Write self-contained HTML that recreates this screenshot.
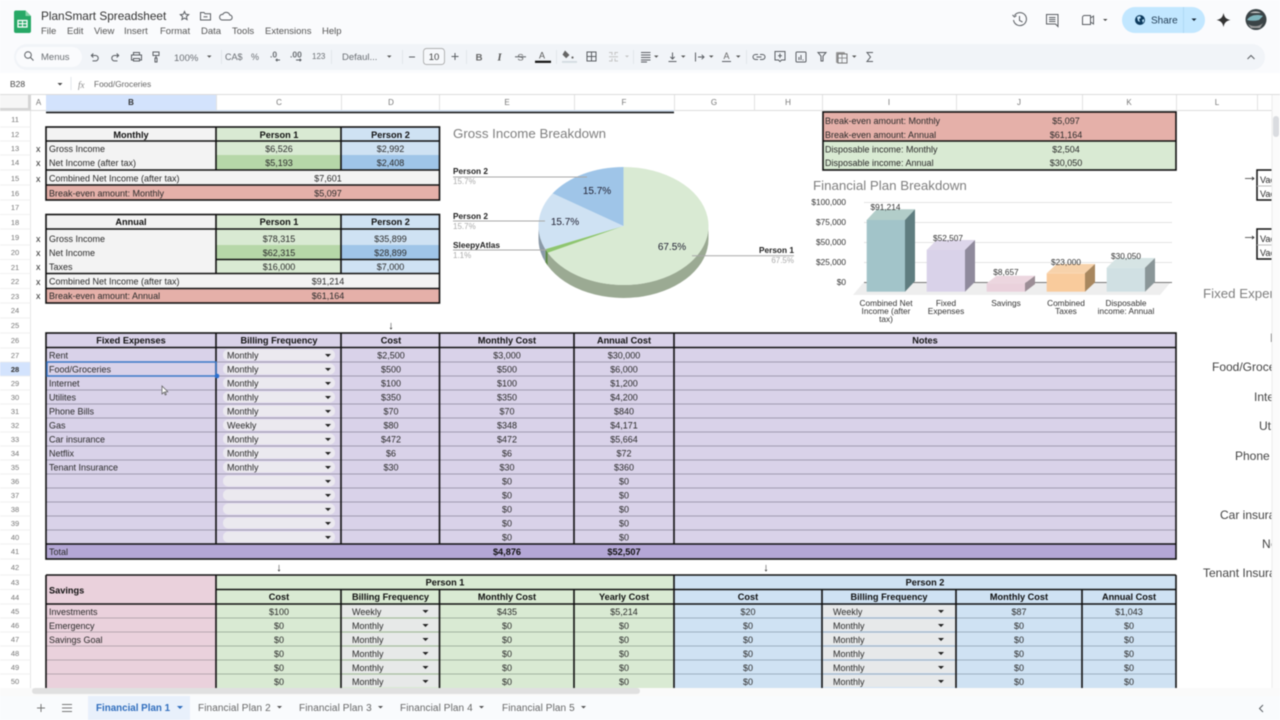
<!DOCTYPE html>
<html><head><meta charset="utf-8"><title>PlanSmart Spreadsheet</title>
<style>
html,body{margin:0;padding:0;background:#fff;width:1280px;height:720px;overflow:hidden}
svg{display:block;font-family:"Liberation Sans",Arial,sans-serif;filter:blur(.4px)}
text{font-size:9px;fill:#2a2a2a}
.m{text-anchor:middle}.b{font-weight:700;fill:#111;font-size:9.2px}
.rh text,.rh{font-size:7.5px;fill:#777;text-anchor:middle}
.ch text{font-size:8px;fill:#777;text-anchor:middle}
.menu text{font-size:9.5px;fill:#555}
.ic{fill:none;stroke:#5a5e63;stroke-width:1}
.ar{fill:#222}
.tb{font-size:9.5px;fill:#6a6e73}
.bx{fill:none;stroke:#111;stroke-width:1.6}
.th{stroke:#111;stroke-width:1.6}
.ln{stroke:#8f8b9d;stroke-width:.8}
.lg{stroke:#93a28f;stroke-width:.8}
.lb{stroke:#8ea0ae;stroke-width:.8}
.chip{fill:#ebe9ef}
.tab{font-size:10px;fill:#666;letter-spacing:.1px}
.ttl{font-size:13.3px;fill:#7f7f7f}
.pl{font-size:8.3px;font-weight:700;fill:#222}
.ps{font-size:8px;fill:#aaa}
.cv{font-size:8.3px;fill:#333}
.side{font-size:12px;fill:#444}
</style></head><body>
<svg width="1280" height="720" viewBox="0 0 1280 720" xmlns="http://www.w3.org/2000/svg">
<!-- chrome -->
<rect width="1280" height="95" fill="#fafbfd"/>
<rect y="73" width="1280" height="22" fill="#fff"/>
<rect x="14" y="44" width="1251" height="26" rx="13" fill="#f1f4f8"/>
<rect x="16" y="47" width="66" height="20" rx="10" fill="#fafbfd"/>
<path d="M14 12.500a2 2 0 0 1 2-2h9.500l5.500 5.500v15a2 2 0 0 1-2 2H16a2 2 0 0 1-2-2z" fill="#27a866"/>
<path d="M25.500 10.500l5.500 5.500h-5.500z" fill="#86d3a8"/>
<rect x="18" y="20.500" width="9" height="6.500" fill="none" stroke="#fff" stroke-width="1.300"/><path d="M18 23.700h9M22.500 20.500v6.500" stroke="#fff" stroke-width="1.100"/>
<text x="41" y="20" style="font-size:11.8px;fill:#333">PlanSmart Spreadsheet</text>
<path d="M184.500 11.500l1.200 2.800 3 .3-2.300 2 .7 3-2.600-1.500-2.600 1.500.7-3-2.300-2 3-.3z" class="ic"/>
<path d="M200.500 12.500h3.500l1 1.300h5.500v6.200h-10z" class="ic"/><path d="M203.500 16.800h4" class="ic"/>
<path d="M222 20h7.500a2.500 2.500 0 0 0 .3-5 3.800 3.800 0 0 0-7-.6 2.800 2.800 0 0 0-.8 5.600z" class="ic"/>
<g class="menu"><text x="41" y="34">File</text><text x="67" y="34">Edit</text><text x="94" y="34">View</text><text x="124" y="34">Insert</text><text x="160" y="34">Format</text><text x="201" y="34">Data</text><text x="232" y="34">Tools</text><text x="265" y="34">Extensions</text><text x="322" y="34">Help</text></g>
<!-- toolbar -->
<circle cx="28" cy="55" r="3.300" class="ic"/><path d="M30.500 57.500l3 3" class="ic"/>
<text x="41" y="60" class="tb">Menus</text>
<path d="M91.500 55.500h4a2.700 2.700 0 0 1 0 5.400h-3M93.300 53.500l-2 2 2 2" class="ic"/>
<path d="M118.500 55.500h-4a2.700 2.700 0 0 0 0 5.400h3M116.700 53.500l2 2-2 2" class="ic"/>
<path d="M131.500 55h10v5h-2v-1.500h-6V60h-2zM133.500 55v-2.500h6V55M133.500 58.500V61h6v-2.500" class="ic"/>
<path d="M153 52h6v3.500h-6zM156 55.500v2.500M155 58h2v4h-2z" class="ic"/>
<text x="174" y="61" class="tb">100%</text>
<path d="M207 55.500h4.500l-2.200 2.200z" fill="#555"/>
<text x="225" y="60" class="tb" style="font-size:9px">CA$</text>
<text x="251" y="60" class="tb" style="font-size:9px">%</text>
<text x="270" y="57.500" class="tb" style="font-size:8.500px;font-weight:700">.0</text><path d="M280 60h-4m1.300-1.300L276 60l1.300 1.300" class="ic"/>
<text x="290" y="57.500" class="tb" style="font-size:8.500px;font-weight:700">.00</text><path d="M296 60h5m-1.300-1.300L301 60l-1.300 1.300" class="ic"/>
<text x="312" y="59" class="tb" style="font-size:8px">123</text>
<text x="342" y="60" class="tb">Defaul...</text>
<path d="M387 55.500h4.500l-2.200 2.200z" fill="#555"/>
<path d="M409 57h6" class="ic"/>
<rect x="423.500" y="48.500" width="21" height="16" rx="3" fill="#f6f8fb" stroke="#999" stroke-width=".7"/>
<text x="434" y="60" class="m" style="font-size:9.500px;fill:#444">10</text>
<path d="M451.500 56.500h7M455 53v7" class="ic"/>
<text x="479" y="60.500" class="m" style="font-size:9.500px;font-weight:700;fill:#666">B</text>
<text x="499.500" y="60.500" class="m" style="font-size:10.500px;font-style:italic;font-family:'Liberation Serif';fill:#555;font-weight:700">I</text>
<text x="520.500" y="60.500" class="m" style="font-size:9.500px;fill:#666">S</text><path d="M515 56.800h11" class="ic"/>
<text x="542" y="58.500" class="m" style="font-size:9px;fill:#555">A</text><rect x="535" y="60.700" width="16" height="2.200" fill="#111"/>
<path d="M565 50.500l4.500 4.500-3.300 3.300-3.700-3.700z" fill="#666"/><circle cx="572.500" cy="57.500" r="1.100" fill="#666"/><rect x="562" y="61" width="15" height="1.800" fill="#d3dbe0"/>
<rect x="587" y="52" width="9" height="9" class="ic"/><path d="M591.500 52v9M587 56.500h9" class="ic"/>
<path d="M609 52.500h3v2.500M609 61h3v-2.500M618 52.500h-3v2.500M618 61h-3v-2.500M609 56.700h9" stroke="#c4c4c4" fill="none"/><path d="M625 55.500h4l-2 2z" fill="#c4c4c4"/>
<path d="M641 52.500h9.500M641 55h9.500M641 57.500h9.500M641 60h9.500M641 62h6" class="ic" stroke-width=".9"/><path d="M654 55.500h4.500l-2.200 2.200z" fill="#555"/>
<path d="M668.500 61.500h8M672.500 52.500v6.500m-2.200-2.200 2.200 2.200 2.200-2.200" class="ic"/><path d="M681 55.500h4.500l-2.200 2.200z" fill="#555"/>
<path d="M695.500 52.500v9M698 57h5.500m-1.800-2.200L704 57l-2.300 2.200" class="ic"/><path d="M709 55.500h4.500l-2.200 2.200z" fill="#555"/>
<text x="723.500" y="59" style="font-size:9px;fill:#666">A</text><path d="M722 61.500h9" class="ic"/><path d="M736 55.500h4.500l-2.200 2.200z" fill="#555"/>
<path d="M758 54.500h-2.500a2.500 2.500 0 0 0 0 5h2.500M760 54.500h2.500a2.500 2.500 0 0 1 0 5H760M756.500 57h5" class="ic"/>
<path d="M775 51.500h10v8.500h-3.500l-1.500 1.500-1.500-1.500H775zM780 53.500v4.500M778 55.700h4" class="ic"/>
<rect x="796" y="52" width="10" height="10" class="ic" rx="1"/><path d="M799 60v-3M801 60v-5M803.500 60h-1" class="ic" stroke-width=".8"/>
<path d="M818 52.500h8l-3 3.500v5h-2v-5z" class="ic"/>
<rect x="836" y="52" width="9" height="11" fill="#999" rx="1"/><rect x="838" y="54" width="9" height="9" fill="#f1f4f8" stroke="#777"/><path d="M838 58h9M842 54v9" stroke="#777" stroke-width=".7"/><path d="M852 55.500h4.500l-2.200 2.200z" fill="#555"/>
<path d="M873 52.500h-6l3.500 4.500-3.500 4.500h6" class="ic"/>
<path d="M1247.500 59l3.500-3.500 3.500 3.500" class="ic"/>
<path d="M221.500 50v14M331.500 50v14M402.500 50v14M466.500 50v14M556.500 50v14M633.500 50v14M746.500 50v14" stroke="#e2e6ea"/>
<!-- top right -->
<path d="M1014.500 15.500a6.500 6.500 0 1 1-1 4.500M1012.500 15l2 2 2-1.500M1019.500 16v4.500l3 1.500" class="ic" stroke-width="1.300"/>
<path d="M1046.500 14.500h11.500v12l-2.500-2.500h-9zM1049 17.500h6.500M1049 19.500h6.500M1049 21.500h6.500" class="ic" stroke-width="1.200"/>
<path d="M1082.500 17.500a2 2 0 0 1 2-2h6v9h-8zM1090.500 18l3-2v8l-3-2" class="ic" stroke-width="1.300"/><path d="M1103 19h4.500l-2.200 2z" fill="#444"/>
<rect x="1122" y="7" width="83" height="26" rx="13" fill="#c2e7ff"/>
<circle cx="1140" cy="20" r="5" fill="#0b3a5e"/><path d="M1137 17l3-1 1 2-2 1 1 3-2-1zM1142 20l2-1 0 2-1 2z" fill="#c2e7ff"/>
<text x="1151" y="23.500" style="font-size:10px;fill:#1f3a52">Share</text>
<path d="M1183.500 7v26" stroke="#b0daf5"/><path d="M1191.500 18.500h5l-2.500 2.500z" fill="#123"/>
<path d="M1223.500 13c1 4.500 2.500 6 7 7-4.500 1-6 2.500-7 7-1-4.500-2.500-6-7-7 4.500-1 6-2.500 7-7z" fill="#333"/>
<circle cx="1256" cy="19.500" r="10.500" fill="#3a4346"/><path d="M1247 20c3-5 10-6 16-4l-4 4c-4 1-8 1-12 0z" fill="#7fb5bd"/><path d="M1248 24c4 3 11 3 15-1l-3 5h-9z" fill="#999"/><path d="M1250 13c3-2 8-2 11 0z" fill="#ccc"/>
<!-- formula bar -->
<text x="10" y="87" style="font-size:8.500px;fill:#444">B28</text>
<path d="M57.500 83h5l-2.500 2.500z" fill="#444"/><path d="M71 77v13" stroke="#e2e6ea"/>
<text x="78" y="88" style="font-size:9px;font-style:italic;font-family:'Liberation Serif';fill:#888">fx</text>
<text x="94" y="87" style="font-size:8.300px;fill:#666">Food/Groceries</text>
<!-- sheet bg -->
<rect y="95" width="1280" height="593" fill="#fff"/>
<path d="M0 94.500h1280" stroke="#dcdcdc"/>
<!-- col headers -->
<rect x="0" y="95" width="31" height="16" fill="#f6f6f6"/>
<rect x="0" y="108" width="31" height="3" fill="#d4d4d4"/><rect x="28" y="95" width="3" height="16" fill="#d4d4d4"/>
<rect x="46" y="95" width="170" height="16" fill="#d3e3fd"/>
<path d="M0 110.500h1272" stroke="#dcdcdc"/>
<path d="M216.500 95v16M341.500 95v16M439.500 95v16M574.500 95v16M674.500 95v16M754.500 95v16M822.500 95v16M956.500 95v16M1082.500 95v16M1176.500 95v16M1257.500 95v16" stroke="#e2e2e2"/>
<g class="ch"><text x="38.500" y="105">A</text><text x="131" y="105" style="font-weight:700;fill:#333">B</text><text x="279" y="105">C</text><text x="391" y="105">D</text><text x="507" y="105">E</text><text x="624" y="105">F</text><text x="714" y="105">G</text><text x="788" y="105">H</text><text x="889" y="105">I</text><text x="1019" y="105">J</text><text x="1129" y="105">K</text><text x="1217" y="105">L</text></g>
<!-- row headers -->
<rect y="362" width="31" height="14" fill="#d3e3fd"/>
<path d="M30.500 111v577" stroke="#e6e6e6"/>
<path d="M0 127h31M0 141h31M0 155h31M0 170h31M0 185h31M0 200h31M0 214.500h31M0 229h31M0 245h31M0 259.500h31M0 273.500h31M0 288.500h31M0 303h31M0 318h31M0 333h31M0 348h31M0 362h31M0 376h31M0 390h31M0 404h31M0 418h31M0 432h31M0 446h31M0 460h31M0 474h31M0 488h31M0 502h31M0 516h31M0 530h31M0 544h31M0 559h31M0 575h31M0 589.500h31M0 604h31M0 618h31M0 632h31M0 646h31M0 660h31M0 674h31" stroke="#ededed" stroke-width=".8"/>
<g class="rh"><text x="15" y="122">11</text><text x="15" y="137">12</text><text x="15" y="151">13</text><text x="15" y="165">14</text><text x="15" y="181">15</text><text x="15" y="196">16</text><text x="15" y="210">17</text><text x="15" y="225">18</text><text x="15" y="240">19</text><text x="15" y="255">20</text><text x="15" y="270">21</text><text x="15" y="284">22</text><text x="15" y="299">23</text><text x="15" y="313">24</text><text x="15" y="328">25</text><text x="15" y="343">26</text><text x="15" y="358">27</text><text x="15" y="372" style="font-weight:700;fill:#333">28</text><text x="15" y="386">29</text><text x="15" y="400">30</text><text x="15" y="414">31</text><text x="15" y="428">32</text><text x="15" y="442">33</text><text x="15" y="456">34</text><text x="15" y="470">35</text><text x="15" y="484">36</text><text x="15" y="498">37</text><text x="15" y="512">38</text><text x="15" y="526">39</text><text x="15" y="540">40</text><text x="15" y="554">41</text><text x="15" y="570">42</text><text x="15" y="585">43</text><text x="15" y="600">44</text><text x="15" y="614">45</text><text x="15" y="628">46</text><text x="15" y="642">47</text><text x="15" y="656">48</text><text x="15" y="670">49</text><text x="15" y="684">50</text></g>
<!-- frozen line top -->
<rect x="46" y="110" width="628" height="2" fill="#cfdcec"/><path d="M46 112.500h628" stroke="#111" stroke-width="1.600"/>
<!-- x markers -->
<g><text x="36" y="152">x</text><text x="36" y="166">x</text><text x="36" y="182">x</text><text x="36" y="242">x</text><text x="36" y="256">x</text><text x="36" y="270">x</text><text x="36" y="285">x</text><text x="36" y="299">x</text></g>
<!-- Monthly table -->
<rect x="46" y="127" width="170" height="43" fill="#f3f3f3"/>
<rect x="216" y="127" width="125" height="28" fill="#d9ead3"/><rect x="216" y="155" width="125" height="15" fill="#b6d7a8"/>
<rect x="341" y="127" width="98.500" height="28" fill="#cfe2f3"/><rect x="341" y="155" width="98.500" height="15" fill="#9fc5e8"/>
<rect x="46" y="170" width="393.500" height="15" fill="#f3f3f3"/><rect x="46" y="185" width="393.500" height="15" fill="#e5b0a9"/>
<rect x="46" y="127" width="393.500" height="73" class="bx"/>
<path d="M216 127v43M341 127v43M46 141h393.500M46 170h393.500M46 185h393.500" class="th"/>
<text x="131" y="138" class="m b">Monthly</text><text x="279" y="138" class="m b">Person 1</text><text x="390.500" y="138" class="m b">Person 2</text>
<text x="49" y="152">Gross Income</text><text x="279" y="152" class="m">$6,526</text><text x="390.500" y="152" class="m">$2,992</text>
<text x="49" y="166">Net Income (after tax)</text><text x="279" y="166" class="m">$5,193</text><text x="390.500" y="166" class="m">$2,408</text>
<text x="49" y="181.500">Combined Net Income (after tax)</text><text x="328" y="181.500" class="m">$7,601</text>
<text x="49" y="196.500">Break-even amount: Monthly</text><text x="328" y="196.500" class="m">$5,097</text>
<!-- Annual table -->
<rect x="46" y="214.500" width="170" height="59" fill="#f3f3f3"/>
<rect x="216" y="214.500" width="125" height="30.500" fill="#d9ead3"/><rect x="216" y="245" width="125" height="14.500" fill="#b6d7a8"/><rect x="216" y="259.500" width="125" height="14" fill="#d9ead3"/>
<rect x="341" y="214.500" width="98.500" height="30.500" fill="#cfe2f3"/><rect x="341" y="245" width="98.500" height="14.500" fill="#9fc5e8"/><rect x="341" y="259.500" width="98.500" height="14" fill="#cfe2f3"/>
<rect x="46" y="273.500" width="393.500" height="15" fill="#f3f3f3"/><rect x="46" y="288.500" width="393.500" height="14.500" fill="#e5b0a9"/>
<rect x="46" y="214.500" width="393.500" height="88.500" class="bx"/>
<path d="M216 214.500v59M341 214.500v59M46 229h393.500M216 259.500h223.500M46 273.500h393.500M46 288.500h393.500" class="th"/>
<text x="131" y="225" class="m b">Annual</text><text x="279" y="225" class="m b">Person 1</text><text x="390.500" y="225" class="m b">Person 2</text>
<text x="49" y="242">Gross Income</text><text x="279" y="242" class="m">$78,315</text><text x="390.500" y="242" class="m">$35,899</text>
<text x="49" y="256">Net Income</text><text x="279" y="256" class="m">$62,315</text><text x="390.500" y="256" class="m">$28,899</text>
<text x="49" y="270">Taxes</text><text x="279" y="270" class="m">$16,000</text><text x="390.500" y="270" class="m">$7,000</text>
<text x="49" y="284.500">Combined Net Income (after tax)</text><text x="328" y="284.500" class="m">$91,214</text>
<text x="49" y="299">Break-even amount: Annual</text><text x="328" y="299" class="m">$61,164</text>
<!-- Top right table -->
<rect x="823" y="112" width="353" height="29" fill="#e5b0a9"/><rect x="823" y="141" width="353" height="29" fill="#d9ead3"/>
<rect x="823" y="112" width="353" height="58" class="bx"/><path d="M823 141h353" class="th"/>
<text x="825" y="124">Break-even amount: Monthly</text><text x="1066" y="124" class="m">$5,097</text>
<text x="825" y="138">Break-even amount: Annual</text><text x="1066" y="138" class="m">$61,164</text>
<text x="825" y="152.500">Disposable income: Monthly</text><text x="1066" y="152.500" class="m">$2,504</text>
<text x="825" y="166">Disposable income: Annual</text><text x="1066" y="166" class="m">$30,050</text>
<!-- Pie -->
<text x="453" y="138" class="ttl">Gross Income Breakdown</text>
<path d="M708.500 226A85 59 0 0 1 547.800 252.800v13A85 59 0 0 0 708.500 239z" fill="#9baa93"/>
<path d="M547.800 252.800L545.300 249.100v13l2.500 3.700z" fill="#5f8a4c"/>
<path d="M545.300 249.100A85 59 0 0 1 538.500 226v13a85 59 0 0 0 6.800 23.100z" fill="#8b9aa8"/>
<path d="M623.500 226V167A85 59 0 1 1 547.800 252.800z" fill="#d9ead3"/>
<path d="M623.500 226L547.800 252.800A85 59 0 0 1 545.300 249.100z" fill="#8ec56f"/>
<path d="M623.500 226L545.300 249.100A85 59 0 0 1 552.600 193.400z" fill="#cfe2f3"/>
<path d="M623.500 226L552.600 193.400A85 59 0 0 1 623.500 167z" fill="#9fc5e8"/>
<text x="597" y="194" class="m" style="font-size:10px;fill:#223">15.7%</text>
<text x="565" y="225" class="m" style="font-size:10px;fill:#223">15.7%</text>
<text x="672" y="250" class="m" style="font-size:10px;fill:#223">67.5%</text>
<path d="M453 177h134M453 221h92M453 250h94M692 255.700h102" stroke="#a8a8a8"/>
<text x="453" y="174" class="pl">Person 2</text><text x="453" y="184" class="ps">15.7%</text>
<text x="453" y="219" class="pl">Person 2</text><text x="453" y="229" class="ps">15.7%</text>
<text x="453" y="248" class="pl">SleepyAtlas</text><text x="453" y="258" class="ps">1.1%</text>
<text x="794" y="253" class="pl" text-anchor="end">Person 1</text><text x="794" y="263" class="ps" text-anchor="end">67.5%</text>
<!-- Bars -->
<text x="813" y="190" class="ttl">Financial Plan Breakdown</text>
<path d="M864 202.500h308M864 222.500h308M864 242.500h308M864 262.500h308" stroke="#e3e3e3"/>
<path d="M853 295h307l10-12H863z" fill="#eeeeee"/>
<path d="M864 282.500h308" stroke="#777"/>
<g><text x="846" y="205" text-anchor="end" class="cv">$100,000</text><text x="846" y="225" text-anchor="end" class="cv">$75,000</text><text x="846" y="245" text-anchor="end" class="cv">$50,000</text><text x="846" y="265" text-anchor="end" class="cv">$25,000</text><text x="846" y="285" text-anchor="end" class="cv">$0</text></g>
<rect x="866.700" y="220" width="38.300" height="71.700" fill="#a2c4c9"/><path d="M866.700 220l10-10.700H915L905 220z" fill="#b2cdc9"/><path d="M905 220l10-10.700v71.700l-10 10.700z" fill="#5f7d80"/>
<rect x="926.700" y="250" width="38.300" height="41.700" fill="#d9d2e9"/><path d="M926.700 250l10-10H975l-10 10z" fill="#ddd6ea"/><path d="M965 250l10-10v41.700l-10 10z" fill="#8f8a9c"/>
<rect x="986.700" y="283.300" width="38.300" height="8.400" fill="#ead1dc"/><path d="M986.700 283.300l10-7.600H1035l-10 7.600z" fill="#ecd6df"/><path d="M1025 283.300l10-7.600v8.400l-10 7.600z" fill="#9c8e96"/>
<rect x="1046.700" y="273.300" width="38.300" height="18.400" fill="#f9cb9c"/><path d="M1046.700 273.300l10-9.300H1095l-10 9.300z" fill="#f7d2ab"/><path d="M1085 273.300l10-9.300v18.400l-10 9.300z" fill="#a8875f"/>
<rect x="1106.700" y="267.700" width="38.300" height="24" fill="#d0e0e3"/><path d="M1106.700 267.700l10-9.700H1155l-10 9.700z" fill="#d6e4e4"/><path d="M1145 267.700l10-9.700v24l-10 9.700z" fill="#8a9698"/>
<text x="885.500" y="210" class="m cv">$91,214</text><text x="948" y="241" class="m cv">$52,507</text><text x="1006" y="275" class="m cv">$8,657</text><text x="1066" y="265" class="m cv">$23,000</text><text x="1126" y="259" class="m cv">$30,050</text>
<g class="m"><text x="886" y="306" class="m cv">Combined Net</text><text x="886" y="314" class="m cv">Income (after</text><text x="886" y="322" class="m cv">tax)</text><text x="946" y="306" class="m cv">Fixed</text><text x="946" y="314" class="m cv">Expenses</text><text x="1006" y="306" class="m cv">Savings</text><text x="1066" y="306" class="m cv">Combined</text><text x="1066" y="314" class="m cv">Taxes</text><text x="1126" y="306" class="m cv">Disposable</text><text x="1126" y="314" class="m cv">income: Annual</text></g>
<!-- Arrows -->
<text x="391" y="329" class="m" style="font-size:11px;fill:#222">↓</text><text x="279" y="571" class="m" style="font-size:11px;fill:#222">↓</text><text x="766" y="571" class="m" style="font-size:11px;fill:#222">↓</text>
<!-- Fixed expenses -->
<rect x="46" y="333" width="1130" height="211" fill="#d9d2e9"/>
<rect x="46" y="544" width="1130" height="15" fill="#b4a7d6"/>
<path d="M46 362h1130M46 376h1130M46 390h1130M46 404h1130M46 418h1130M46 432h1130M46 446h1130M46 460h1130M46 474h1130M46 488h1130M46 502h1130M46 516h1130M46 530h1130" class="ln"/>
<rect x="46" y="333" width="1130" height="226" class="bx"/>
<path d="M46 347.500h1130M46 544h1130M216 333v211M341 333v211M439.500 333v211M574 333v211M674 333v211" class="th"/>
<text x="131" y="343.500" class="m b">Fixed Expenses</text><text x="279" y="343.500" class="m b">Billing Frequency</text><text x="391" y="343.500" class="m b">Cost</text><text x="507" y="343.500" class="m b">Monthly Cost</text><text x="624" y="343.500" class="m b">Annual Cost</text><text x="925" y="343.500" class="m b">Notes</text>
<g class="chip"><rect x="223" y="349.500" width="112" height="11" rx="5"/><rect x="223" y="363.500" width="112" height="11" rx="5"/><rect x="223" y="377.500" width="112" height="11" rx="5"/><rect x="223" y="391.500" width="112" height="11" rx="5"/><rect x="223" y="405.500" width="112" height="11" rx="5"/><rect x="223" y="419.500" width="112" height="11" rx="5"/><rect x="223" y="433.500" width="112" height="11" rx="5"/><rect x="223" y="447.500" width="112" height="11" rx="5"/><rect x="223" y="461.500" width="112" height="11" rx="5"/><rect x="223" y="475.500" width="112" height="11" rx="5"/><rect x="223" y="489.500" width="112" height="11" rx="5"/><rect x="223" y="503.500" width="112" height="11" rx="5"/><rect x="223" y="517.500" width="112" height="11" rx="5"/><rect x="223" y="531.500" width="112" height="11" rx="5"/></g>
<g class="ar"><path d="M325 354h6l-3 3zM325 368h6l-3 3zM325 382h6l-3 3zM325 396h6l-3 3zM325 410h6l-3 3zM325 424h6l-3 3zM325 438h6l-3 3zM325 452h6l-3 3zM325 466h6l-3 3zM325 480h6l-3 3zM325 494h6l-3 3zM325 508h6l-3 3zM325 522h6l-3 3zM325 536h6l-3 3z"/></g>
<text x="49" y="358.500">Rent</text><text x="227" y="358.500">Monthly</text><text x="391" y="358.500" class="m">$2,500</text><text x="507" y="358.500" class="m">$3,000</text><text x="624" y="358.500" class="m">$30,000</text>
<text x="49" y="372.500">Food/Groceries</text><text x="227" y="372.500">Monthly</text><text x="391" y="372.500" class="m">$500</text><text x="507" y="372.500" class="m">$500</text><text x="624" y="372.500" class="m">$6,000</text>
<text x="49" y="386.500">Internet</text><text x="227" y="386.500">Monthly</text><text x="391" y="386.500" class="m">$100</text><text x="507" y="386.500" class="m">$100</text><text x="624" y="386.500" class="m">$1,200</text>
<text x="49" y="400.500">Utilites</text><text x="227" y="400.500">Monthly</text><text x="391" y="400.500" class="m">$350</text><text x="507" y="400.500" class="m">$350</text><text x="624" y="400.500" class="m">$4,200</text>
<text x="49" y="414.500">Phone Bills</text><text x="227" y="414.500">Monthly</text><text x="391" y="414.500" class="m">$70</text><text x="507" y="414.500" class="m">$70</text><text x="624" y="414.500" class="m">$840</text>
<text x="49" y="428.500">Gas</text><text x="227" y="428.500">Weekly</text><text x="391" y="428.500" class="m">$80</text><text x="507" y="428.500" class="m">$348</text><text x="624" y="428.500" class="m">$4,171</text>
<text x="49" y="442.500">Car insurance</text><text x="227" y="442.500">Monthly</text><text x="391" y="442.500" class="m">$472</text><text x="507" y="442.500" class="m">$472</text><text x="624" y="442.500" class="m">$5,664</text>
<text x="49" y="456.500">Netflix</text><text x="227" y="456.500">Monthly</text><text x="391" y="456.500" class="m">$6</text><text x="507" y="456.500" class="m">$6</text><text x="624" y="456.500" class="m">$72</text>
<text x="49" y="470.500">Tenant Insurance</text><text x="227" y="470.500">Monthly</text><text x="391" y="470.500" class="m">$30</text><text x="507" y="470.500" class="m">$30</text><text x="624" y="470.500" class="m">$360</text>
<text x="507" y="484.500" class="m">$0</text><text x="624" y="484.500" class="m">$0</text><text x="507" y="498.500" class="m">$0</text><text x="624" y="498.500" class="m">$0</text><text x="507" y="512.500" class="m">$0</text><text x="624" y="512.500" class="m">$0</text><text x="507" y="526.500" class="m">$0</text><text x="624" y="526.500" class="m">$0</text><text x="507" y="540.500" class="m">$0</text><text x="624" y="540.500" class="m">$0</text>
<text x="49" y="555">Total</text><text x="507" y="555" class="m b">$4,876</text><text x="624" y="555" class="m b">$52,507</text>
<!-- selection -->
<rect x="47" y="362" width="169" height="14" fill="none" stroke="#3b78c8" stroke-width="1.500"/><circle cx="217" cy="376" r="2.300" fill="#2a6fd0"/>
<path d="M162 386l0 8 2-1.800 1.300 2.800 1-.5-1.200-2.700h2.700z" fill="#fff" stroke="#555" stroke-width=".7"/>
<!-- Savings -->
<rect x="46" y="575" width="170" height="113" fill="#ead1dc"/>
<rect x="216" y="575" width="458" height="113" fill="#d9ead3"/>
<rect x="674" y="575" width="502" height="113" fill="#cfe2f3"/>
<g><rect x="341.500" y="605" width="98" height="12" fill="#e7e9e8"/><rect x="341.500" y="619" width="98" height="12" fill="#e7e9e8"/><rect x="341.500" y="633" width="98" height="12" fill="#e7e9e8"/><rect x="341.500" y="647" width="98" height="12" fill="#e7e9e8"/><rect x="341.500" y="661" width="98" height="12" fill="#e7e9e8"/><rect x="341.500" y="675" width="98" height="12" fill="#e7e9e8"/><rect x="823" y="605" width="133" height="12" fill="#e7e9ea"/><rect x="823" y="619" width="133" height="12" fill="#e7e9ea"/><rect x="823" y="633" width="133" height="12" fill="#e7e9ea"/><rect x="823" y="647" width="133" height="12" fill="#e7e9ea"/><rect x="823" y="661" width="133" height="12" fill="#e7e9ea"/><rect x="823" y="675" width="133" height="12" fill="#e7e9ea"/></g>
<path d="M46 618h170M46 632h170M46 646h170M46 660h170M46 674h170" stroke="#a89aa2" stroke-width=".8"/>
<path d="M216 618h458M216 632h458M216 646h458M216 660h458M216 674h458" class="lg"/>
<path d="M674 618h502M674 632h502M674 646h502M674 660h502M674 674h502" class="lb"/>
<path d="M46 575h1130M46 688V575M1176 575v113M216 575v113M674 575v113M216 589.500h960M46 604h1130M341 589.500V688M439.500 589.500V688M574 589.500V688M822 589.500V688M956 589.500V688M1082 589.500V688" class="th"/>
<text x="49" y="593.500" class="b">Savings</text>
<text x="445" y="585.500" class="m b">Person 1</text><text x="925" y="585.500" class="m b">Person 2</text>
<text x="279" y="600" class="m b">Cost</text><text x="390.500" y="600" class="m b">Billing Frequency</text><text x="507" y="600" class="m b">Monthly Cost</text><text x="624" y="600" class="m b">Yearly Cost</text><text x="748" y="600" class="m b">Cost</text><text x="889" y="600" class="m b">Billing Frequency</text><text x="1019" y="600" class="m b">Monthly Cost</text><text x="1129" y="600" class="m b">Annual Cost</text>
<g class="ar"><path d="M422.500 610h6l-3 3zM422.500 624h6l-3 3zM422.500 638h6l-3 3zM422.500 652h6l-3 3zM422.500 666h6l-3 3zM422.500 680h6l-3 3zM938 610h6l-3 3zM938 624h6l-3 3zM938 638h6l-3 3zM938 652h6l-3 3zM938 666h6l-3 3zM938 680h6l-3 3z"/></g>
<text x="49" y="615">Investments</text><text x="279" y="615" class="m">$100</text><text x="352" y="615">Weekly</text><text x="507" y="615" class="m">$435</text><text x="624" y="615" class="m">$5,214</text><text x="748" y="615" class="m">$20</text><text x="833" y="615">Weekly</text><text x="1019" y="615" class="m">$87</text><text x="1129" y="615" class="m">$1,043</text>
<text x="49" y="629">Emergency</text><text x="279" y="629" class="m">$0</text><text x="352" y="629">Monthly</text><text x="507" y="629" class="m">$0</text><text x="624" y="629" class="m">$0</text><text x="748" y="629" class="m">$0</text><text x="833" y="629">Monthly</text><text x="1019" y="629" class="m">$0</text><text x="1129" y="629" class="m">$0</text>
<text x="49" y="643">Savings Goal</text><text x="279" y="643" class="m">$0</text><text x="352" y="643">Monthly</text><text x="507" y="643" class="m">$0</text><text x="624" y="643" class="m">$0</text><text x="748" y="643" class="m">$0</text><text x="833" y="643">Monthly</text><text x="1019" y="643" class="m">$0</text><text x="1129" y="643" class="m">$0</text>
<text x="279" y="657" class="m">$0</text><text x="352" y="657">Monthly</text><text x="507" y="657" class="m">$0</text><text x="624" y="657" class="m">$0</text><text x="748" y="657" class="m">$0</text><text x="833" y="657">Monthly</text><text x="1019" y="657" class="m">$0</text><text x="1129" y="657" class="m">$0</text>
<text x="279" y="671" class="m">$0</text><text x="352" y="671">Monthly</text><text x="507" y="671" class="m">$0</text><text x="624" y="671" class="m">$0</text><text x="748" y="671" class="m">$0</text><text x="833" y="671">Monthly</text><text x="1019" y="671" class="m">$0</text><text x="1129" y="671" class="m">$0</text>
<text x="279" y="685" class="m">$0</text><text x="352" y="685">Monthly</text><text x="507" y="685" class="m">$0</text><text x="624" y="685" class="m">$0</text><text x="748" y="685" class="m">$0</text><text x="833" y="685">Monthly</text><text x="1019" y="685" class="m">$0</text><text x="1129" y="685" class="m">$0</text>
<!-- right side -->
<path d="M1245 178.500h9m-2-1.500l2 1.500-2 1.500M1245 237.500h9m-2-1.500l2 1.500-2 1.500" stroke="#333" fill="none" stroke-width=".8"/>
<rect x="1257" y="170" width="20" height="30" fill="#fff" stroke="#111" stroke-width="1.500"/><path d="M1257 186h20" stroke="#bbb"/>
<rect x="1257" y="229" width="20" height="30" fill="#fff" stroke="#111" stroke-width="1.500"/><path d="M1257 245h20" stroke="#bbb"/>
<text x="1260" y="183">Vac</text><text x="1260" y="197">Vac</text><text x="1260" y="242">Vac</text><text x="1260" y="256">Vac</text>
<text x="1203" y="298" class="ttl">Fixed Expenses</text>
<text x="1270" y="342" class="side">F</text><text x="1212" y="371" class="side">Food/Groceries</text><text x="1254" y="401" class="side">Internet</text><text x="1259" y="430" class="side">Utilities</text><text x="1235" y="460" class="side">Phone Bills</text><text x="1220" y="519" class="side">Car insurance</text><text x="1262" y="548" class="side">Netflix</text><text x="1203" y="577" class="side">Tenant Insurance</text>
<!-- scrollbars -->
<rect x="1272" y="95" width="8" height="593" fill="#fbfbfb"/><path d="M1272 95v593" stroke="#ececec"/>
<rect x="1273" y="116" width="6" height="21" rx="3" fill="#dadce0"/>
<rect x="0" y="688" width="1280" height="8" fill="#fafafa"/>
<rect x="32" y="688" width="608" height="6" rx="3" fill="#e0e0e0"/>
<!-- tabs -->
<rect y="696" width="1280" height="24" fill="#f9fbfd"/>
<path d="M37 708h8M41 704v8" stroke="#777" stroke-width="1"/>
<path d="M62 704.500h10M62 708h10M62 711.500h10" stroke="#777" stroke-width=".9"/>
<rect x="88" y="696" width="102" height="24" fill="#e8f0fb"/>
<text x="96" y="711" style="font-size:9.800px;font-weight:700;fill:#2f6dbd">Financial Plan 1</text><path d="M177 706h6l-3 3z" fill="#2f6dbd"/>
<text x="198" y="711" class="tab">Financial Plan 2</text><path d="M277 706h5l-2.500 2.500z" fill="#555"/>
<text x="299" y="711" class="tab">Financial Plan 3</text><path d="M378 706h5l-2.500 2.500z" fill="#555"/>
<text x="400" y="711" class="tab">Financial Plan 4</text><path d="M479 706h5l-2.500 2.500z" fill="#555"/>
<text x="502" y="711" class="tab">Financial Plan 5</text><path d="M581 706h5l-2.500 2.500z" fill="#555"/>
<path d="M1263 705l-3.500 3.500 3.500 3.500" class="ic"/>
</svg>
</body></html>
